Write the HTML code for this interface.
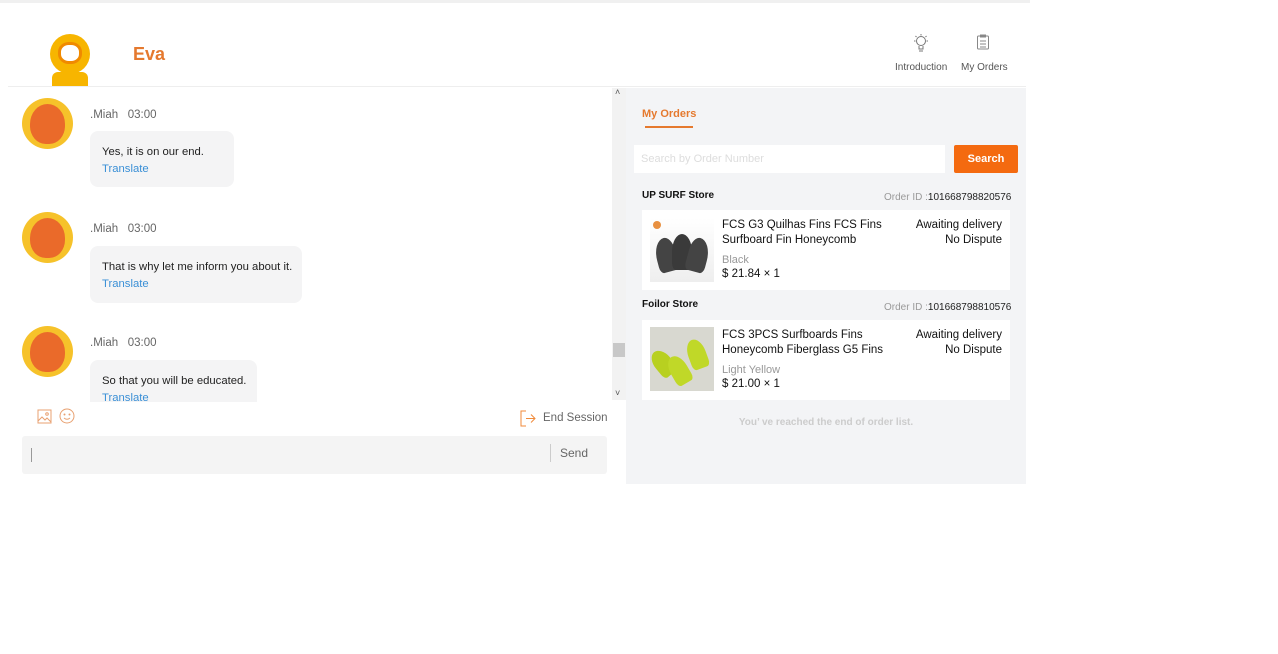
<!DOCTYPE html>
<html><head><meta charset="utf-8"><style>
*{margin:0;padding:0;box-sizing:border-box}
body{width:1278px;height:654px;background:#fff;font-family:"Liberation Sans",sans-serif;position:relative;overflow:hidden}
.a{position:absolute}
.av{position:absolute;left:22px;width:51px;height:51px;border-radius:50%;background:#f6c22a}
.av:after{content:"";position:absolute;left:8px;top:6px;width:35px;height:40px;border-radius:50% 50% 45% 45%;background:#ea6a2a}
.nm{position:absolute;left:90px;font-size:11.5px;color:#666}
.bub{position:absolute;left:90px;background:#f4f4f5;border-radius:8px;padding:13px 12px;font-size:11.3px;color:#222;line-height:17px;white-space:nowrap}
.bub a{color:#3a8fd6;text-decoration:none;display:block}
.card{position:absolute;left:642px;width:368px;height:80px;background:#fff}
.s{font-family:"Liberation Sans",sans-serif}
</style></head><body>
<div class="a" style="left:0;top:0;width:1030px;height:3px;background:#f0f0f0"></div>
<div class="a" style="left:46px;top:30px;width:48px;height:57px;">
 <div class="a" style="left:4px;top:4px;width:40px;height:40px;border-radius:50%;background:#f7b500"></div>
 <div class="a" style="left:12px;top:12px;width:24px;height:22px;border-radius:45%;background:#fff;border:3px solid #f08a00"></div>
 <div class="a" style="left:6px;top:42px;width:36px;height:15px;border-radius:6px 6px 0 0;background:#f7b500"></div>
</div>
<div class="a" style="left:133px;top:44px;font-size:18px;font-weight:bold;color:#e5792e">Eva</div>
<div class="a" style="left:8px;top:86px;width:1018px;height:1px;background:#eee"></div>
<svg class="a" style="left:912px;top:33px" width="18" height="20" viewBox="0 0 18 20" fill="none" stroke="#777" stroke-width="1"><circle cx="9" cy="8" r="4.5"/><path d="M7 13v3h4v-3M7 18h4M9 1v1.5M2 8h1.5M14.5 8H16M3.5 3l1 1M14.5 3l-1 1"/></svg>
<div class="a" style="left:895px;top:62px;font-size:10px;color:#555">Introduction</div>
<svg class="a" style="left:976px;top:34px" width="14" height="16" viewBox="0 0 14 16" fill="none" stroke="#888" stroke-width="1"><rect x="1.5" y="2" width="11" height="13" rx="1"/><path d="M4.5 1h5v2h-5zM4 7h6M4 10h6M4 13h6"/></svg>
<div class="a" style="left:961px;top:62px;font-size:10px;color:#555">My Orders</div>

<div class="av" style="top:98px"></div>
<div class="nm" style="top:109px">.Miah&nbsp;&nbsp; 03:00</div>
<div class="bub" style="top:131px;width:144px;height:56px">Yes, it is on our end.<a>Translate</a></div>
<div class="av" style="top:212px"></div>
<div class="nm" style="top:223px">.Miah&nbsp;&nbsp; 03:00</div>
<div class="bub" style="top:246px;width:212px;height:57px">That is why let me inform you about it.<a>Translate</a></div>
<div class="av" style="top:326px"></div>
<div class="nm" style="top:337px">.Miah&nbsp;&nbsp; 03:00</div>
<div class="bub" style="top:360px;width:167px;height:42px;overflow:hidden;border-radius:8px 8px 0 0">So that you will be educated.<a>Translate</a></div>
<div class="a" style="left:612px;top:88px;width:14px;height:312px;background:#f2f2f2"></div>
<div class="a" style="left:613px;top:343px;width:12px;height:14px;background:#c8c8c8"></div>
<div class="a" style="left:615px;top:87px;font-size:9px;color:#555">˄</div>
<div class="a" style="left:615px;top:388px;font-size:9px;color:#555">˅</div>

<svg class="a" style="left:37px;top:409px" width="15" height="15" viewBox="0 0 15 15" fill="none" stroke="#e8a070"><rect x="1" y="1" width="13" height="13"/><path d="M1 12l4-4 3 3 2-2 4 4"/><circle cx="10" cy="5" r="1.3"/></svg>
<svg class="a" style="left:59px;top:408px" width="16" height="16" viewBox="0 0 16 16" fill="none" stroke="#e8a070"><circle cx="8" cy="8" r="7"/><path d="M5 10q3 2.5 6 0"/><circle cx="5.5" cy="6.5" r=".5"/><circle cx="10.5" cy="6.5" r=".5"/></svg>
<svg class="a" style="left:520px;top:410px" width="16" height="17" viewBox="0 0 16 17" fill="none" stroke="#f08a3a"><path d="M6 1H1v15h5M6 8.5h9M11 4.5l4 4-4 4"/></svg>
<div class="a" style="left:543px;top:412px;font-size:11.5px;color:#666">End Session</div>
<div class="a" style="left:22px;top:436px;width:585px;height:38px;background:#f4f4f4;border-radius:3px"></div>
<div class="a" style="left:31px;top:448px;width:1px;height:14px;background:#999"></div>
<div class="a" style="left:550px;top:444px;width:1px;height:18px;background:#ccc"></div>
<div class="a" style="left:560px;top:446px;font-size:12px;color:#666">Send</div>

<div class="a" style="left:626px;top:88px;width:400px;height:396px;background:#f3f4f6"></div>
<div class="a s" style="left:642px;top:108px;font-size:11px;font-weight:bold;color:#e5792e">My Orders</div>
<div class="a" style="left:645px;top:126px;width:48px;height:2px;background:#e5792e"></div>
<div class="a s" style="left:634px;top:145px;width:311px;height:28px;background:#fff;font-size:11px;color:#ddd;padding:8px 7px">Search by Order Number</div>
<div class="a s" style="left:954px;top:145px;width:64px;height:28px;background:#f46a10;color:#fff;font-size:11px;font-weight:bold;text-align:center;line-height:28px;border-radius:2px">Search</div>

<div class="a s" style="left:642px;top:190px;font-size:10px;font-weight:bold;color:#111">UP SURF Store</div>
<div class="a s" style="left:884px;top:192px;font-size:10px;color:#999">Order ID :<span style="color:#222">101668798820576</span></div>
<div class="card" style="top:210px"></div>
<div class="a" style="left:650px;top:218px;width:64px;height:64px;background:linear-gradient(#fff,#eee)">
 <div class="a" style="left:3px;top:3px;width:8px;height:8px;border-radius:50%;background:#e89040"></div>
 <div class="a" style="left:6px;top:20px;width:20px;height:34px;border-radius:60% 40% 20% 20%;background:#444;transform:rotate(-15deg)"></div>
 <div class="a" style="left:22px;top:16px;width:20px;height:36px;border-radius:50% 50% 20% 20%;background:#3a3a3a"></div>
 <div class="a" style="left:38px;top:20px;width:20px;height:34px;border-radius:40% 60% 20% 20%;background:#444;transform:rotate(15deg)"></div>
</div>
<div class="a s" style="left:722px;top:218px;font-size:11.5px;line-height:15px;color:#111">FCS G3 Quilhas Fins FCS Fins<br>Surfboard Fin Honeycomb</div>
<div class="a s" style="left:722px;top:254px;font-size:11px;color:#999">Black</div>
<div class="a s" style="left:722px;top:268px;font-size:11.5px;color:#111">$ 21.84 × 1</div>
<div class="a s" style="left:880px;top:218px;width:122px;text-align:right;font-size:11.5px;line-height:15px;color:#111">Awaiting delivery<br>No Dispute</div>

<div class="a s" style="left:642px;top:299px;font-size:10px;font-weight:bold;color:#111">Foilor Store</div>
<div class="a s" style="left:884px;top:302px;font-size:10px;color:#999">Order ID :<span style="color:#222">101668798810576</span></div>
<div class="card" style="top:320px"></div>
<div class="a" style="left:650px;top:327px;width:64px;height:64px;background:#d8d8d0">
 <div class="a" style="left:4px;top:22px;width:18px;height:28px;border-radius:50% 50% 20% 20%;background:#b8d020;transform:rotate(-40deg)"></div>
 <div class="a" style="left:20px;top:28px;width:18px;height:30px;border-radius:50% 50% 20% 20%;background:#c0d828;transform:rotate(-30deg)"></div>
 <div class="a" style="left:38px;top:12px;width:18px;height:30px;border-radius:50% 50% 20% 20%;background:#c0d828;transform:rotate(-20deg)"></div>
</div>
<div class="a s" style="left:722px;top:328px;font-size:11.5px;line-height:15px;color:#111">FCS 3PCS Surfboards Fins<br>Honeycomb Fiberglass G5 Fins</div>
<div class="a s" style="left:722px;top:364px;font-size:11px;color:#999">Light Yellow</div>
<div class="a s" style="left:722px;top:378px;font-size:11.5px;color:#111">$ 21.00 × 1</div>
<div class="a s" style="left:880px;top:328px;width:122px;text-align:right;font-size:11.5px;line-height:15px;color:#111">Awaiting delivery<br>No Dispute</div>
<div class="a s" style="left:626px;top:417px;width:400px;text-align:center;font-size:10px;font-weight:bold;color:#ccc">You’ ve reached the end of order list.</div>
</body></html>
